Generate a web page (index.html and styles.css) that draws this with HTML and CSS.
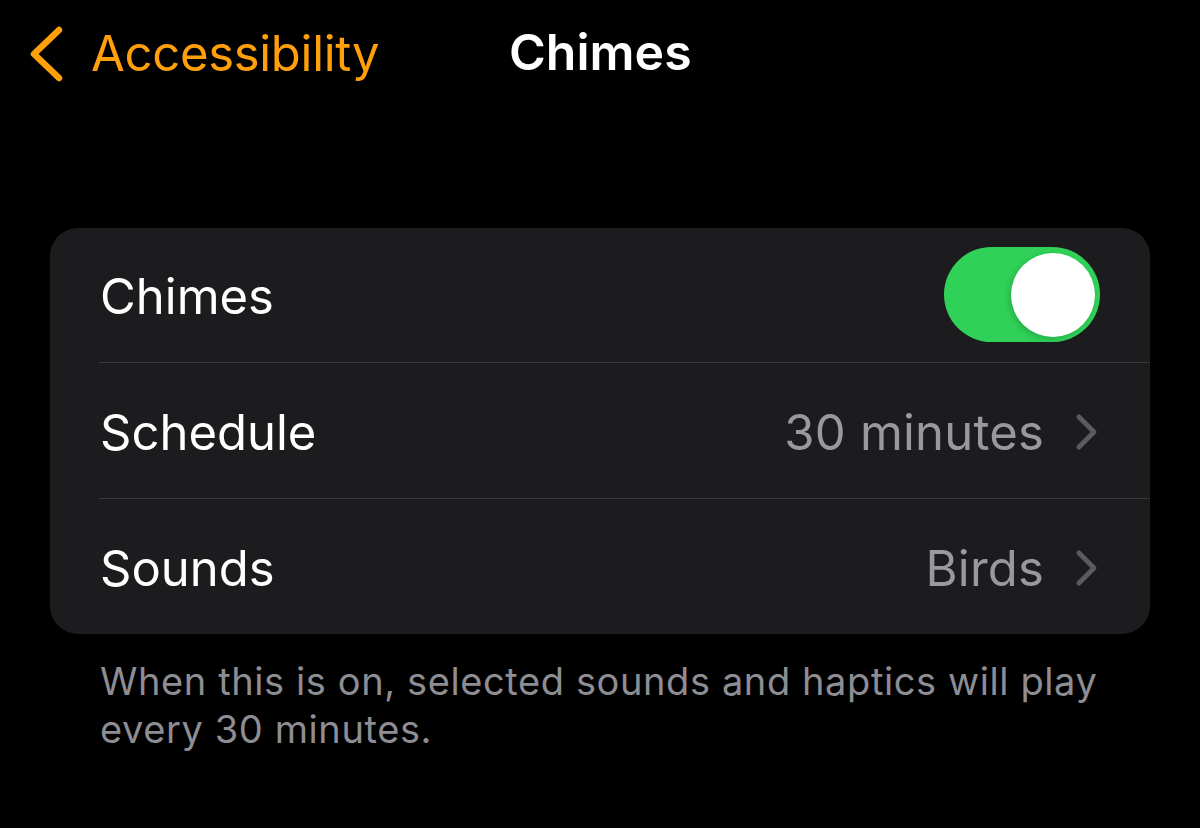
FILE: index.html
```html
<!DOCTYPE html>
<html lang="en">

<head>
    <meta charset="UTF-8">
    <meta name="viewport" content="width=device-width, initial-scale=1.0">
    <title>Chimes</title>
    <link rel="stylesheet" href="styles.css">
</head>

<body>

    <!-- Navigation Bar -->
    <div class="nav">
        <a class="back" href="#">
            <svg class="back-icon" width="38" height="58" viewBox="0 0 38 58">
                <path d="M33 5 L8 29 L33 53" fill="none" stroke="#FF9F0A" stroke-width="6.5" stroke-linecap="round" stroke-linejoin="round"/>
            </svg>
            <span>Accessibility</span>
        </a>
        <div class="nav-title">Chimes</div>
    </div>

    <!-- Settings Group -->
    <div class="group">
        <div class="row">
            <span class="label">Chimes</span>
            <div class="switch on">
                <div class="knob"></div>
            </div>
        </div>
        <div class="row">
            <span class="label">Schedule</span>
            <span class="value">30 minutes</span>
            <svg class="chevron" width="26" height="40" viewBox="0 0 26 40">
                <path d="M5 5 L20 20 L5 35" fill="none" stroke="#5B5B60" stroke-width="5" stroke-linecap="round" stroke-linejoin="round"/>
            </svg>
        </div>
        <div class="row">
            <span class="label">Sounds</span>
            <span class="value">Birds</span>
            <svg class="chevron" width="26" height="40" viewBox="0 0 26 40">
                <path d="M5 5 L20 20 L5 35" fill="none" stroke="#5B5B60" stroke-width="5" stroke-linecap="round" stroke-linejoin="round"/>
            </svg>
        </div>
    </div>

    <!-- Footer note -->
    <p class="footer">When this is on, selected sounds and haptics will play every 30 minutes.</p>

</body>
</html>
```

FILE: styles.css
```css
body {
    background: #000;
    margin: 0;
    padding: 0;
    font-family: Inter, "Noto Sans", sans-serif;
    color: #fff;
    width: 1200px;
    height: 828px;
    overflow: hidden;
}

/* Top navigation */
.nav {
    position: relative;
    height: 106px;
    display: flex;
    align-items: center;
}

.back {
    display: flex;
    align-items: center;
    gap: 27px;
    color: #FF9F0A;
    text-decoration: none;
    font-size: 49px;
    letter-spacing: -0.3px;
    padding-left: 26px;
}

.back-icon {
    margin-top: 2px;
}

.nav-title {
    position: absolute;
    left: 509px;
    top: 22px;
    font-size: 50px;
    font-weight: 600;
}

/* Grouped list */
.group {
    margin: 122px 50px 0 50px;
    background: #1C1C1E;
    border-radius: 28px;
    overflow: hidden;
}

.row {
    display: flex;
    align-items: center;
    height: 135px;
    margin-left: 49px;
    padding-right: 50px;
    border-top: 1px solid #38383A;
}

.row:first-child {
    border-top: none;
    height: 134px;
}

.label {
    flex: 1;
    margin-left: 1px;
    padding-top: 3px;
    font-size: 49px;
}

.value {
    font-size: 49px;
    color: #98989F;
    letter-spacing: 0.2px;
    margin-right: 30px;
    padding-top: 3px;
}

.chevron {
    margin-top: 2px;
}

/* Toggle switch */
.switch {
    width: 156px;
    height: 95px;
    border-radius: 48px;
    background: #39393D;
    position: relative;
    margin-top: -1px;
}

.switch.on {
    background: #30D158;
}

.knob {
    position: absolute;
    top: 6px;
    right: 5px;
    width: 84px;
    height: 84px;
    border-radius: 50%;
    background: #fff;
    box-shadow: -2px 2px 6px rgba(0, 0, 0, 0.18);
}

.footer {
    margin: 23px 100px 0 100px;
    font-size: 38px;
    line-height: 48px;
    color: #8D8D93;
    letter-spacing: 0.6px;
}
```
